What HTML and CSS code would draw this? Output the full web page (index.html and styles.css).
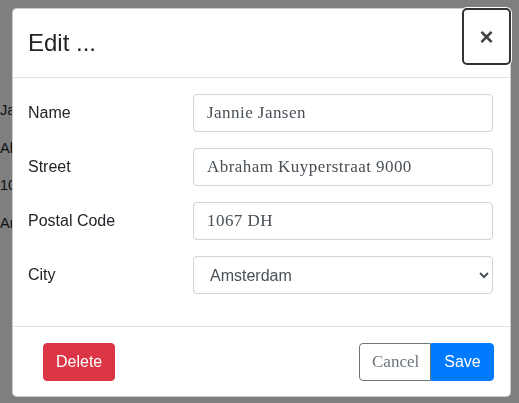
FILE: index.html
```html
<!DOCTYPE html>
<html>
<head>
<meta charset="utf-8">
<link rel="stylesheet" href="styles.css">
</head>
<body>
<div class="page">
  <div class="page-line">Jannie Jansen</div>
  <div class="page-line">Abraham Kuyperstraat 9000</div>
  <div class="page-line">1067 DH</div>
  <div class="page-line">Amsterdam</div>
</div>
<div class="backdrop"></div>
<div class="modal">
  <div class="modal-header">
    <h5 class="modal-title">Edit ...</h5>
    <button class="close" type="button">×</button>
  </div>
  <div class="modal-body">
    <div class="form-row">
      <label class="col-label">Name</label>
      <input class="form-control" type="text" value="Jannie Jansen">
    </div>
    <div class="form-row">
      <label class="col-label">Street</label>
      <input class="form-control" type="text" value="Abraham Kuyperstraat 9000">
    </div>
    <div class="form-row">
      <label class="col-label">Postal Code</label>
      <input class="form-control" type="text" value="1067 DH">
    </div>
    <div class="form-row">
      <label class="col-label">City</label>
      <select class="form-control select">
        <option>Amsterdam</option>
      </select>
    </div>
  </div>
  <div class="modal-footer">
    <button class="btn btn-danger" type="button">Delete</button>
    <div class="btn-group">
      <button class="btn btn-outline" type="button">Cancel</button>
      <button class="btn btn-primary" type="button">Save</button>
    </div>
  </div>
</div>
</body>
</html>
```
FILE: styles.css
```css
html, body {
  margin: 0;
  padding: 0;
}
body {
  background: #fff;
  font-family: "Liberation Sans", Arial, sans-serif;
  font-size: 16px;
  color: #212529;
  width: 519px;
  height: 403px;
  overflow: hidden;
}
.page {
  padding-top: 92px;
  font-size: 14.5px;
}
.page-line {
  line-height: 37.7px;
  height: 37.7px;
  white-space: nowrap;
  color: #212529;
}
.backdrop {
  position: fixed;
  inset: 0;
  background: rgba(0, 0, 0, 0.5);
}
.modal {
  position: fixed;
  top: 8px;
  left: 12px;
  width: 499px;
  box-sizing: border-box;
  background: #fff;
  border: 1px solid rgba(0, 0, 0, 0.2);
  border-radius: 4.8px;
  display: flex;
  flex-direction: column;
}
.modal-header {
  display: flex;
  align-items: flex-start;
  justify-content: space-between;
  padding: 16px 16px 16px 15px;
  border-bottom: 1px solid #dee2e6;
}
.modal-title {
  margin: 0;
  font-size: 24px;
  font-weight: 400;
  line-height: 36px;
  color: #212529;
}
.close {
  margin: -17px -17px -16px auto;
  width: 49px;
  height: 57px;
  box-sizing: border-box;
  background: transparent;
  border: 2px solid #333;
  border-radius: 5px;
  box-shadow: 0 0 0 1px #fff;
  font-family: "Liberation Sans", Arial, sans-serif;
  font-size: 24px;
  font-weight: 700;
  line-height: 1;
  color: rgba(0, 0, 0, 0.75);
  padding: 0;
  display: flex;
  align-items: center;
  justify-content: center;
}
.modal-body {
  padding: 16px 17px 16px 16px;
}
.form-row {
  display: grid;
  grid-template-columns: 1fr 300px;
  align-items: center;
  margin-bottom: 16px;
}
.col-label {
  line-height: 24px;
  padding: 7px 0 7px 0;
  margin-left: -1px;
}
.form-control {
  box-sizing: border-box;
  height: 38px;
  width: 300px;
  padding: 6px 12px 6px 13px;
  border: 1px solid #ced4da;
  border-radius: 4px;
  background: #fff;
  font-family: "Liberation Serif", "Times New Roman", serif;
  font-size: 17px;
  letter-spacing: 0.45px;
  color: #495057;
  margin: 0;
}
.select {
  font-family: "Liberation Sans", Arial, sans-serif;
  font-size: 16px;
  letter-spacing: 0;
  padding: 6px 8px 6px 12px;
}
.modal-footer {
  display: flex;
  align-items: center;
  justify-content: space-between;
  padding: 16px 16px 15px 30px;
  border-top: 1px solid #dee2e6;
}
.btn {
  box-sizing: border-box;
  height: 38px;
  padding: 6px 12px;
  font-size: 16px;
  line-height: 24px;
  border: 1px solid transparent;
  border-radius: 4px;
  font-family: "Liberation Sans", Arial, sans-serif;
}
.btn-danger {
  background: #dc3545;
  border-color: #dc3545;
  color: #fff;
  width: 72px;
}
.btn-group {
  display: flex;
}
.btn-outline {
  background: #fff;
  border-color: #6c757d;
  color: #6c757d;
  font-family: "Liberation Serif", "Times New Roman", serif;
  font-size: 17px;
  border-radius: 4px 0 0 4px;
  width: 72px;
}
.btn-primary {
  background: #007bff;
  border-color: #007bff;
  color: #fff;
  border-radius: 0 4px 4px 0;
  width: 63px;
}
```
